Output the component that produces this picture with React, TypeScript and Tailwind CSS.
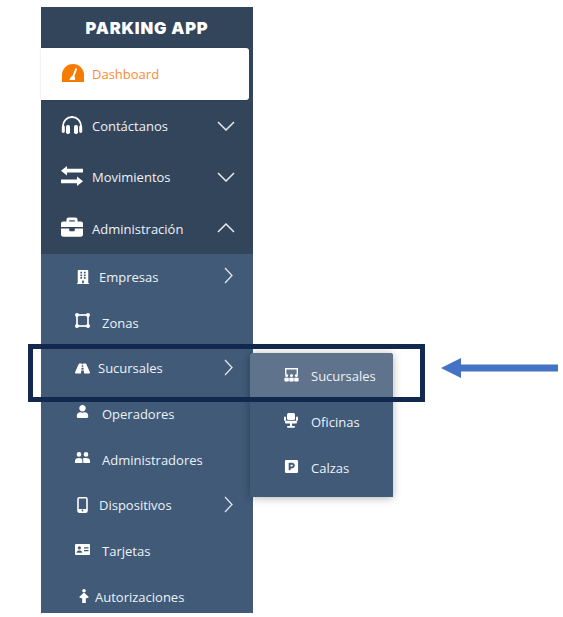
import React from "react";
import { FaBuilding, FaRoad, FaUser, FaParking, FaBriefcase } from "react-icons/fa";

const Chevron = ({ dir }: { dir: "down" | "up" | "right" }) => {
  if (dir === "right") {
    return (
      <svg width="9" height="17" viewBox="0 0 9 17" fill="none" stroke="#dfe5ec" strokeWidth="1.3">
        <path d="M1 1l7 7.5-7 7.5" />
      </svg>
    );
  }
  return (
    <svg width="18" height="10" viewBox="0 0 18 10" fill="none" stroke="#e6ebf0" strokeWidth="1.5">
      <path d={dir === "down" ? "M1 1l8 8 8-8" : "M1 9l8-8 8 8"} />
    </svg>
  );
};

const Gauge = () => (
  <svg width="22" height="18" viewBox="0 0 22 18">
    <path d="M0 18v-7a11 11 0 0 1 22 0v7z" fill="#f57c00" />
    <path d="M13.6 4l1.5.7-2.6 7.6c.7.9.7 2 .4 3.7H7.4c.6-2 1.400-3.600 3-4.100z" fill="#fff" />
  </svg>
);

const Headset = () => (
  <svg width="22" height="19" viewBox="0 0 22 19">
    <path d="M2 15v-4a9 9 0 0 1 18 0v4" fill="none" stroke="#fff" strokeWidth="1.8" />
    <rect x="0.8" y="10.5" width="3" height="7.5" rx="1.4" fill="#fff" />
    <rect x="5" y="10" width="4" height="9" rx="1.8" fill="#fff" />
    <rect x="13" y="10" width="4" height="9" rx="1.8" fill="#fff" />
    <rect x="18.2" y="10.5" width="3" height="7.5" rx="1.4" fill="#fff" />
  </svg>
);

const Transfer = () => (
  <svg width="22" height="20" viewBox="0 0 22 20" fill="#fff">
    <path d="M6 0L0 4.7l6 4.7V6.6h16V2.8H6z" />
    <path d="M16 10.6l6 4.7-6 4.7v-2.8H0v-3.8h16z" />
  </svg>
);

const Zone = () => (
  <svg width="15" height="15" viewBox="0 0 15 15" fill="none" stroke="#fff" strokeWidth="1.7">
    <rect x="2" y="2" width="11" height="11" />
    <g fill="#fff" stroke="none">
      <circle cx="2" cy="2" r="2" />
      <circle cx="13" cy="2" r="2" />
      <circle cx="2" cy="13" r="2" />
      <circle cx="13" cy="13" r="2" />
    </g>
  </svg>
);

const People = () => (
  <svg width="15" height="11" viewBox="0 0 15 11" fill="#fff">
    <circle cx="4" cy="2.4" r="2.3" />
    <circle cx="11" cy="2.4" r="2.3" />
    <path d="M0 11V8.6C0 6.8 2 6 4 6s3.4.7 3.4 2.6V11z" />
    <path d="M8.3 11V8.4C8.3 7.5 8 7 7.6 6.5 8.6 6.1 9.9 6 11 6c2 0 4 .8 4 2.6V11z" />
  </svg>
);

const Phone = () => (
  <svg width="11" height="16" viewBox="0 0 11 16">
    <rect x="1" y="0.8" width="9" height="14.4" rx="1.4" fill="none" stroke="#fff" strokeWidth="1.6" />
    <rect x="1" y="12" width="9" height="3" fill="#fff" />
    <circle cx="5.5" cy="13.5" r="0.9" fill="#405a78" />
  </svg>
);

const Card = () => (
  <svg width="15" height="11" viewBox="0 0 15 11">
    <rect width="15" height="11" rx="0.8" fill="#fff" />
    <circle cx="4.4" cy="3.8" r="1.6" fill="#405a78" />
    <path d="M1.6 8.8c0-1.6 1.4-2.2 2.8-2.2s2.8.6 2.8 2.2z" fill="#405a78" />
    <path d="M9 3.2h4.5v1.2H9zM9 6h4.5v1.2H9z" fill="#405a78" />
  </svg>
);

const Theater = () => (
  <svg width="15" height="14" viewBox="0 0 15 14" fill="#fff">
    <path d="M1 0h13v6.5h-1.4V1.4H2.4v5.1H1z" />
    <circle cx="2.6" cy="7.6" r="1.5" />
    <circle cx="7.5" cy="7.6" r="1.5" />
    <circle cx="12.4" cy="7.6" r="1.5" />
    <rect x="0.4" y="9.8" width="4.4" height="3.6" rx="0.6" />
    <rect x="5.3" y="9.8" width="4.4" height="3.6" rx="0.6" />
    <rect x="10.2" y="9.8" width="4.4" height="3.6" rx="0.6" />
  </svg>
);

const OfficeChair = () => (
  <svg width="14" height="15" viewBox="0 0 14 15" fill="#fff">
    <rect x="3" y="0" width="8" height="7" rx="1.5" />
    <rect x="0" y="3.5" width="2" height="4.5" rx="1" />
    <rect x="12" y="3.5" width="2" height="4.5" rx="1" />
    <rect x="1" y="7.8" width="12" height="2.6" rx="1" />
    <rect x="6" y="10" width="2" height="3.2" />
    <rect x="3" y="13" width="8" height="1.8" rx="0.8" />
  </svg>
);

const Waiting = () => (
  <svg width="10" height="14" viewBox="0 0 10 14" fill="#fff">
    <circle cx="5" cy="1.8" r="1.8" />
    <path d="M5 3.6L10 8.2 6.8 9.6V14H3.2V9.6L0 8.2z" />
  </svg>
);

const subRows = [
  { label: "Empresas", icon: <FaBuilding size={14} />, text: "ml-[4px]", arrow: true },
  { label: "Zonas", icon: <Zone />, text: "ml-[8px]", arrow: false, iconOffset: "-mt-[3px] -ml-[1px]" },
  { label: "Sucursales", icon: <FaRoad size={15} />, text: "ml-[4px]", arrow: true, iconOffset: "-ml-[1px]" },
  { label: "Operadores", icon: <FaUser size={13} />, text: "ml-[7px]", arrow: false, iconOffset: "-mt-[5px]" },
  { label: "Administradores", icon: <People />, text: "ml-[8px]", arrow: false, iconOffset: "-mt-[3px] -ml-[1px]" },
  { label: "Dispositivos", icon: <Phone />, text: "ml-[3px]", arrow: true, iconOffset: "ml-[1px]" },
  { label: "Tarjetas", icon: <Card />, text: "ml-[8px]", arrow: false, iconOffset: "-mt-[3px] -ml-[1px]" },
  { label: "Autorizaciones", icon: <Waiting />, text: "-ml-[3px]", arrow: false, iconOffset: "ml-[3px]" },
];

const mainRows = [
  { label: "Contáctanos", icon: <Headset />, dir: "down" as const },
  { label: "Movimientos", icon: <Transfer />, dir: "down" as const },
  { label: "Administración", icon: <FaBriefcase size={22} />, dir: "up" as const },
];

const flyout = [
  { label: "Sucursales", icon: <Theater />, active: true },
  { label: "Oficinas", icon: <OfficeChair /> },
  { label: "Calzas", icon: <FaParking size={15} /> },
];

export default function App() {
  return (
    <div className="relative w-[563px] h-[617px] bg-white overflow-hidden font-['Open_Sans',sans-serif] font-medium text-[13px] text-[#eef2f6]">
      <aside className="ml-[41px] pt-[7px] w-[212px]">
        <div className="bg-[#32455b]">
          <div className="h-[41px] flex items-center justify-center text-white font-['Inter',sans-serif] font-black text-[16.5px] tracking-[0.8px] pt-[1px]">
            PARKING APP
          </div>
          <div className="h-[52px] w-[208px] bg-white rounded-r-[3px] flex items-center pl-[21px] text-[#fb8c36] shadow-[0_0_2px_rgba(0,0,0,0.2)]">
            <span className="w-[30px] flex -mt-[2px]"><Gauge /></span>
            <span className="pt-[2px]">Dashboard</span>
          </div>
          {mainRows.map((row) => (
            <div key={row.label} className="h-[51.4px] flex items-center pl-[20px] pr-[18px]">
              <span className="w-[31px] flex -mt-[2px] text-white">{row.icon}</span>
              <span className="flex-1 pt-[2px]">{row.label}</span>
              <Chevron dir={row.dir} />
            </div>
          ))}
        </div>
        <div className="bg-[#405a78] h-[359px] -mt-[0.4px]">
          {subRows.map((row) => (
            <div key={row.label} className="h-[45.7px] flex items-center pl-[35px] pr-[20px]">
              <span className={`w-[19px] flex text-white ${row.iconOffset ?? ""}`}>{row.icon}</span>
              <span className={`flex-1 pt-[2px] ${row.text}`}>{row.label}</span>
              {row.arrow && <span className="flex -mt-[2px]"><Chevron dir="right" /></span>}
            </div>
          ))}
        </div>
      </aside>

      <div className="absolute left-[250px] top-[353px] w-[143px] h-[144px] bg-[#405a78] rounded-t-[3px] shadow-[0_1px_8px_rgba(0,0,0,0.3)]">
        {flyout.map((item) => (
          <div key={item.label} className={`h-[46px] flex items-center pl-[34px] ${item.active ? "bg-[#5f738c] rounded-t-[3px]" : ""}`}>
            <span className="w-[27px] flex text-white -mt-[3px]">{item.icon}</span>
            <span className="pt-[2px]">{item.label}</span>
          </div>
        ))}
      </div>

      {/* annotation over the screenshot */}
      <div className="absolute left-[28px] top-[344px] w-[397px] h-[58px] border-[5px] border-[#12284f]" />
      <svg className="absolute left-[441px] top-[357px]" width="117" height="22" viewBox="0 0 117 22" fill="#4472c4">
        <path d="M0 11L20 1v6.600h97v6.800H20V21z" />
      </svg>
    </div>
  );
}
